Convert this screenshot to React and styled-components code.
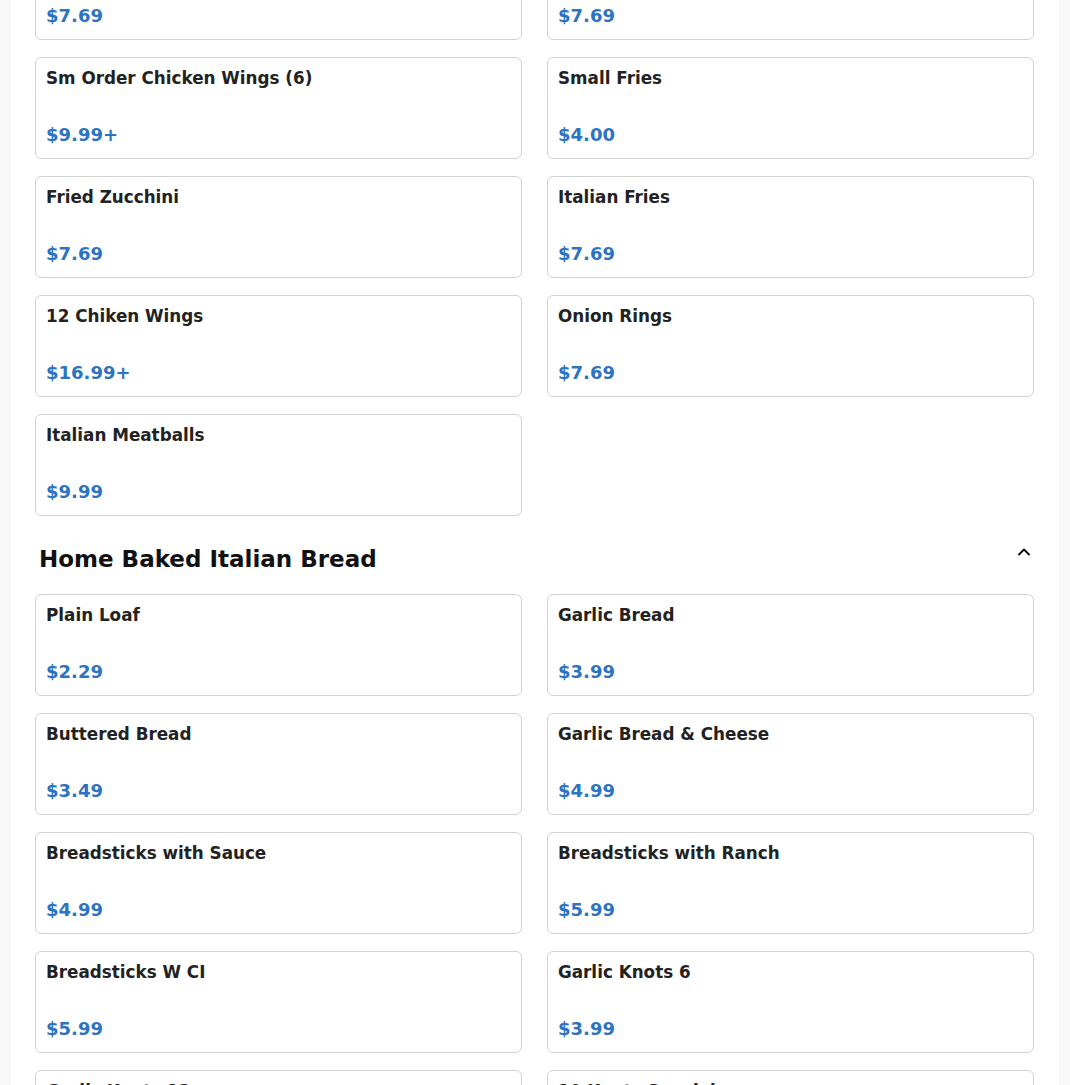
import React, {useState} from "react";
import styled, {createGlobalStyle} from "styled-components";

const sections = [
    {
        title: "Appetizers",
        hideHeader: true,
        items: [
            {name: "Mozzarella Sticks", price: "$7.69"},
            {name: "Jalapeno Poppers", price: "$7.69"},
            {name: "Sm Order Chicken Wings (6)", price: "$9.99+"},
            {name: "Small Fries", price: "$4.00"},
            {name: "Fried Zucchini", price: "$7.69"},
            {name: "Italian Fries", price: "$7.69"},
            {name: "12 Chiken Wings", price: "$16.99+"},
            {name: "Onion Rings", price: "$7.69"},
            {name: "Italian Meatballs", price: "$9.99"},
        ],
    },
    {
        title: "Home Baked Italian Bread",
        items: [
            {name: "Plain Loaf", price: "$2.29"},
            {name: "Garlic Bread", price: "$3.99"},
            {name: "Buttered Bread", price: "$3.49"},
            {name: "Garlic Bread & Cheese", price: "$4.99"},
            {name: "Breadsticks with Sauce", price: "$4.99"},
            {name: "Breadsticks with Ranch", price: "$5.99"},
            {name: "Breadsticks W CI", price: "$5.99"},
            {name: "Garlic Knots 6", price: "$3.99"},
            {name: "Garlic Knots 12", price: "$6.99"},
            {name: "10 Knots Special", price: "$7.99"},
        ],
    },
];

export default function App() {
    return (
        <>
            <GlobalStyle/>
            <Page>
                {sections.map((s) => (
                    <Section key={s.title} section={s}/>
                ))}
            </Page>
        </>
    );
}

function Section({section}) {
    const [open, setOpen] = useState(true);
    return (
        <section>
            {!section.hideHeader && (
                <SectionHeader onClick={() => setOpen(!open)}>
                    <h2>{section.title}</h2>
                    <svg width="20" height="20" viewBox="0 0 24 24" fill="none" stroke="#111"
                         strokeWidth="2.3" strokeLinecap="round" strokeLinejoin="round">
                        {open ? <path d="M6 15l6-6 6 6"/> : <path d="M6 9l6 6 6-6"/>}
                    </svg>
                </SectionHeader>
            )}
            {open && (
                <Grid>
                    {section.items.map((item) => (
                        <Card key={item.name}>
                            <ItemName>{item.name}</ItemName>
                            <Price>{item.price}</Price>
                        </Card>
                    ))}
                </Grid>
            )}
        </section>
    );
}

const GlobalStyle = createGlobalStyle`
    body {
        margin: 0;
        background: #f8f8f8;
        font-family: "DejaVu Sans", "Liberation Sans", sans-serif;
        overflow: hidden;
    }
`;

const Page = styled.main`
    width: 1048px;
    margin: -62px auto 0;
    background: #fff;
    padding: 0 25px 40px 24px;
    box-sizing: border-box;
    min-height: 1300px;
`;

const SectionHeader = styled.div`
    display: flex;
    align-items: center;
    justify-content: space-between;
    padding: 25px 0 0 4px;
    height: 36px;
    margin-bottom: 17px;
    cursor: pointer;

    h2 {
        margin: 0;
        font-size: 23px;
        font-weight: 700;
        color: #111;
        line-height: 36px;
    }

    svg {
        margin-top: -14px;
    }
`;

const Grid = styled.div`
    display: grid;
    grid-template-columns: 1fr 1fr;
    column-gap: 25px;
    row-gap: 17px;
`;

const Card = styled.div`
    display: flex;
    flex-direction: column;
    justify-content: space-between;
    height: 102px;
    box-sizing: border-box;
    padding: 10px 10px 12px;
    border: 1px solid #d2d2d2;
    border-radius: 6px;
    background: #fff;
`;

const ItemName = styled.div`
    font-size: 16.8px;
    font-weight: 700;
    color: #222;
    line-height: 20px;
`;

const Price = styled.div`
    font-size: 18px;
    font-weight: 700;
    color: #2c73c2;
    line-height: 22px;
`;
